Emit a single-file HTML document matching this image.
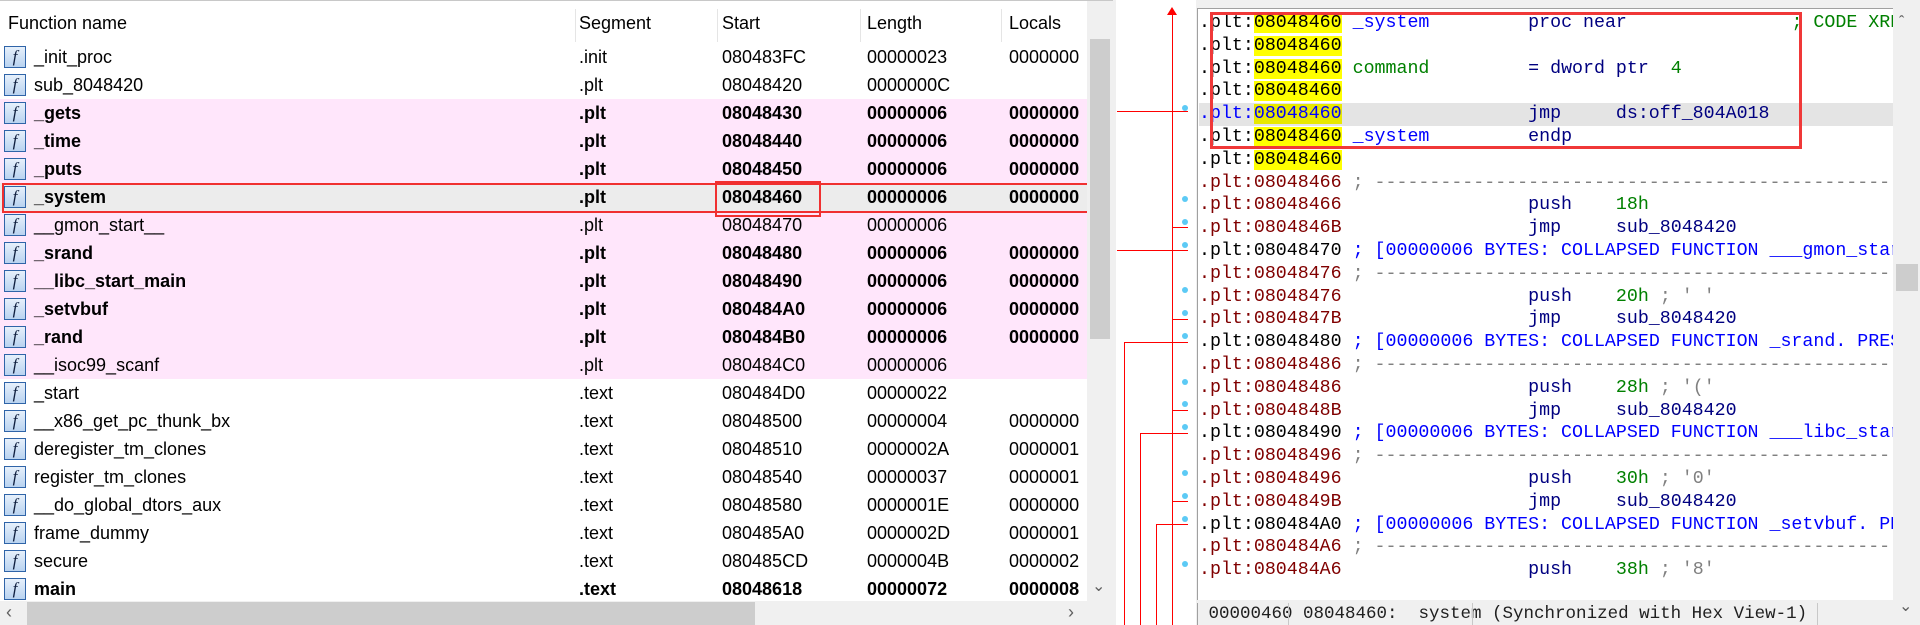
<!DOCTYPE html>
<html><head><meta charset="utf-8"><style>
*{margin:0;padding:0;box-sizing:border-box}
body{width:1920px;height:625px;overflow:hidden;background:#f0f0f0;position:relative;font-family:"Liberation Sans",sans-serif}
.a{position:absolute}
#left{left:0;top:0;width:1113px;height:625px;background:#fff;border-top:1px solid #c8c8c8;overflow:hidden}
.hdr{position:absolute;top:4px;left:0;width:1087px;height:37px;background:#fff;font-size:18px;color:#000}
.hdr span{position:absolute;top:8px}
.hsep{position:absolute;top:4px;width:1px;height:33px;background:#e5e5e5}
.row{position:absolute;left:0;width:1087px;height:28px;font-size:18px;line-height:28px;white-space:nowrap;overflow:hidden}
.row span{position:absolute;top:0}
.pk{background:#ffe6fb}
.sel{background:#ececec}
.b{font-weight:bold}
.ic{position:absolute;left:4px;top:3px;width:22px;height:22px;border:1px solid #2f64a8;background:linear-gradient(#e6f0fb,#b9d3f0);font:italic 17px "Liberation Serif",serif;line-height:20px;text-align:center;color:#102040}
#code{left:1197px;top:8px;width:696px;height:592px;background:#fff;border-left:1px solid #a0a0a0;border-top:1px solid #a0a0a0;overflow:hidden}
.ln{position:absolute;left:1px;height:22.8px;width:700px;font:18.3px/22.8px "Liberation Mono",monospace;white-space:pre}
.k{color:#000}.r{color:#800000}.y{background:#ffff00}.bl{color:#0000ff}.nv{color:#000080}.g{color:#008000}.gr{color:#808080}
.dot{position:absolute;width:6px;height:6px;border-radius:3px;background:#5ccaf5;left:1182px}
.rl{position:absolute;background:#f00}
</style></head><body>
<div id="left" class="a">
<div class="hdr"><span style="left:8px">Function name</span><span style="left:579px">Segment</span><span style="left:722px">Start</span><span style="left:867px">Length</span><span style="left:1009px">Locals</span>
<div class="hsep" style="left:575px"></div><div class="hsep" style="left:717px"></div><div class="hsep" style="left:860px"></div><div class="hsep" style="left:1001px"></div></div>

<div class="row" style="top:42px"><div class="ic">f</div><span style="left:34px">_init_proc</span><span style="left:579px">.init</span><span style="left:722px">080483FC</span><span style="left:867px">00000023</span><span style="left:1009px">0000000</span></div>
<div class="row" style="top:70px"><div class="ic">f</div><span style="left:34px">sub_8048420</span><span style="left:579px">.plt</span><span style="left:722px">08048420</span><span style="left:867px">0000000C</span></div>
<div class="row pk b" style="top:98px"><div class="ic">f</div><span style="left:34px">_gets</span><span style="left:579px">.plt</span><span style="left:722px">08048430</span><span style="left:867px">00000006</span><span style="left:1009px">0000000</span></div>
<div class="row pk b" style="top:126px"><div class="ic">f</div><span style="left:34px">_time</span><span style="left:579px">.plt</span><span style="left:722px">08048440</span><span style="left:867px">00000006</span><span style="left:1009px">0000000</span></div>
<div class="row pk b" style="top:154px"><div class="ic">f</div><span style="left:34px">_puts</span><span style="left:579px">.plt</span><span style="left:722px">08048450</span><span style="left:867px">00000006</span><span style="left:1009px">0000000</span></div>
<div class="row sel b" style="top:182px"><div class="ic">f</div><span style="left:34px">_system</span><span style="left:579px">.plt</span><span style="left:722px">08048460</span><span style="left:867px">00000006</span><span style="left:1009px">0000000</span></div>
<div class="row pk" style="top:210px"><div class="ic">f</div><span style="left:34px">__gmon_start__</span><span style="left:579px">.plt</span><span style="left:722px">08048470</span><span style="left:867px">00000006</span></div>
<div class="row pk b" style="top:238px"><div class="ic">f</div><span style="left:34px">_srand</span><span style="left:579px">.plt</span><span style="left:722px">08048480</span><span style="left:867px">00000006</span><span style="left:1009px">0000000</span></div>
<div class="row pk b" style="top:266px"><div class="ic">f</div><span style="left:34px">__libc_start_main</span><span style="left:579px">.plt</span><span style="left:722px">08048490</span><span style="left:867px">00000006</span><span style="left:1009px">0000000</span></div>
<div class="row pk b" style="top:294px"><div class="ic">f</div><span style="left:34px">_setvbuf</span><span style="left:579px">.plt</span><span style="left:722px">080484A0</span><span style="left:867px">00000006</span><span style="left:1009px">0000000</span></div>
<div class="row pk b" style="top:322px"><div class="ic">f</div><span style="left:34px">_rand</span><span style="left:579px">.plt</span><span style="left:722px">080484B0</span><span style="left:867px">00000006</span><span style="left:1009px">0000000</span></div>
<div class="row pk" style="top:350px"><div class="ic">f</div><span style="left:34px">__isoc99_scanf</span><span style="left:579px">.plt</span><span style="left:722px">080484C0</span><span style="left:867px">00000006</span></div>
<div class="row" style="top:378px"><div class="ic">f</div><span style="left:34px">_start</span><span style="left:579px">.text</span><span style="left:722px">080484D0</span><span style="left:867px">00000022</span></div>
<div class="row" style="top:406px"><div class="ic">f</div><span style="left:34px">__x86_get_pc_thunk_bx</span><span style="left:579px">.text</span><span style="left:722px">08048500</span><span style="left:867px">00000004</span><span style="left:1009px">0000000</span></div>
<div class="row" style="top:434px"><div class="ic">f</div><span style="left:34px">deregister_tm_clones</span><span style="left:579px">.text</span><span style="left:722px">08048510</span><span style="left:867px">0000002A</span><span style="left:1009px">0000001</span></div>
<div class="row" style="top:462px"><div class="ic">f</div><span style="left:34px">register_tm_clones</span><span style="left:579px">.text</span><span style="left:722px">08048540</span><span style="left:867px">00000037</span><span style="left:1009px">0000001</span></div>
<div class="row" style="top:490px"><div class="ic">f</div><span style="left:34px">__do_global_dtors_aux</span><span style="left:579px">.text</span><span style="left:722px">08048580</span><span style="left:867px">0000001E</span><span style="left:1009px">0000000</span></div>
<div class="row" style="top:518px"><div class="ic">f</div><span style="left:34px">frame_dummy</span><span style="left:579px">.text</span><span style="left:722px">080485A0</span><span style="left:867px">0000002D</span><span style="left:1009px">0000001</span></div>
<div class="row" style="top:546px"><div class="ic">f</div><span style="left:34px">secure</span><span style="left:579px">.text</span><span style="left:722px">080485CD</span><span style="left:867px">0000004B</span><span style="left:1009px">0000002</span></div>
<div class="row b" style="top:574px"><div class="ic">f</div><span style="left:34px">main</span><span style="left:579px">.text</span><span style="left:722px">08048618</span><span style="left:867px">00000072</span><span style="left:1009px">0000008</span></div>

<div class="a" style="left:2px;top:182px;width:1088px;height:30px;border:2px solid #f03030"></div>
<div class="a" style="left:715px;top:180px;width:106px;height:36px;border:2px solid #f03030"></div>
<div class="a" style="left:1087px;top:0;width:26px;height:600px;background:#f0f0f0"></div>
<div class="a" style="left:1090px;top:38px;width:20px;height:300px;background:#cdcdcd"></div>
<div class="a" style="left:1092px;top:575px;color:#606060;font-size:16px">&#8964;</div>
<div class="a" style="left:0;top:600px;width:1113px;height:25px;background:#f0f0f0"></div>
<div class="a" style="left:27px;top:601px;width:728px;height:23px;background:#cdcdcd"></div>
<div class="a" style="left:1068px;top:601px;color:#606060;font-size:18px">&#8250;</div>
<div class="a" style="left:6px;top:601px;color:#606060;font-size:18px">&#8249;</div>
</div>

<div class="a" style="left:1116px;top:0;width:80px;height:625px;background:#fff"></div>
<div class="rl" style="left:1172px;top:14px;width:1px;height:611px"></div>
<div class="a" style="left:1167px;top:7px;width:0;height:0;border-left:5px solid transparent;border-right:5px solid transparent;border-bottom:8px solid #f00"></div>
<div class="rl" style="left:1117px;top:111px;width:71px;height:1px"></div>
<div class="rl" style="left:1117px;top:250px;width:71px;height:1px"></div>
<div class="rl" style="left:1172px;top:227px;width:16px;height:1px"></div>
<div class="rl" style="left:1172px;top:319px;width:16px;height:1px"></div>
<div class="rl" style="left:1172px;top:410px;width:16px;height:1px"></div>
<div class="rl" style="left:1172px;top:501px;width:16px;height:1px"></div>
<div class="rl" style="left:1124px;top:342px;width:64px;height:1px"></div>
<div class="rl" style="left:1124px;top:342px;width:1px;height:283px"></div>
<div class="rl" style="left:1140px;top:433px;width:48px;height:1px"></div>
<div class="rl" style="left:1140px;top:433px;width:1px;height:192px"></div>
<div class="rl" style="left:1156px;top:524px;width:32px;height:1px"></div>
<div class="rl" style="left:1156px;top:524px;width:1px;height:101px"></div>
<div class="dot" style="top:105px"></div><div class="dot" style="top:196px"></div><div class="dot" style="top:219px"></div><div class="dot" style="top:242px"></div><div class="dot" style="top:287px"></div><div class="dot" style="top:310px"></div><div class="dot" style="top:333px"></div><div class="dot" style="top:379px"></div><div class="dot" style="top:401px"></div><div class="dot" style="top:424px"></div><div class="dot" style="top:470px"></div><div class="dot" style="top:493px"></div><div class="dot" style="top:516px"></div><div class="dot" style="top:561px"></div>

<div id="code" class="a">
<div class="ln" style="top:3px"><span class="k">.plt:</span><span class="y">08048460</span> <span class="bl">_system</span>         <span class="nv">proc near</span>               <span class="g">; CODE XREF</span></div>
<div class="ln" style="top:25.8px"><span class="k">.plt:</span><span class="y">08048460</span></div>
<div class="ln" style="top:48.6px"><span class="k">.plt:</span><span class="y">08048460</span> <span class="g">command</span>         <span class="nv">= dword ptr</span>  <span class="g">4</span></div>
<div class="ln" style="top:71.4px"><span class="k">.plt:</span><span class="y">08048460</span></div>
<div class="ln" style="top:94.2px;background:#e4e4e4"><span class="bl">.plt:</span><span class="y bl" style="background:#e8e800">08048460</span>                 <span class="nv">jmp     ds:off_804A018</span></div>
<div class="ln" style="top:117px"><span class="k">.plt:</span><span class="y">08048460</span> <span class="bl">_system</span>         <span class="nv">endp</span></div>
<div class="ln" style="top:139.8px"><span class="k">.plt:</span><span class="y">08048460</span></div>
<div class="ln r" style="top:162.6px">.plt:08048466 <span class="gr">; ---------------------------------------------------------</span></div>
<div class="ln" style="top:185.4px"><span class="r">.plt:08048466</span>                 <span class="nv">push</span>    <span class="g">18h</span></div>
<div class="ln" style="top:208.2px"><span class="r">.plt:0804846B</span>                 <span class="nv">jmp     sub_8048420</span></div>
<div class="ln" style="top:231px"><span class="k">.plt:08048470</span> <span class="bl">; [00000006 BYTES: COLLAPSED FUNCTION ___gmon_start</span></div>
<div class="ln r" style="top:253.8px">.plt:08048476 <span class="gr">; ---------------------------------------------------------</span></div>
<div class="ln" style="top:276.6px"><span class="r">.plt:08048476</span>                 <span class="nv">push</span>    <span class="g">20h</span> <span class="gr">; ' '</span></div>
<div class="ln" style="top:299.4px"><span class="r">.plt:0804847B</span>                 <span class="nv">jmp     sub_8048420</span></div>
<div class="ln" style="top:322.2px"><span class="k">.plt:08048480</span> <span class="bl">; [00000006 BYTES: COLLAPSED FUNCTION _srand. PRESS</span></div>
<div class="ln r" style="top:345px">.plt:08048486 <span class="gr">; ---------------------------------------------------------</span></div>
<div class="ln" style="top:367.8px"><span class="r">.plt:08048486</span>                 <span class="nv">push</span>    <span class="g">28h</span> <span class="gr">; '('</span></div>
<div class="ln" style="top:390.6px"><span class="r">.plt:0804848B</span>                 <span class="nv">jmp     sub_8048420</span></div>
<div class="ln" style="top:413.4px"><span class="k">.plt:08048490</span> <span class="bl">; [00000006 BYTES: COLLAPSED FUNCTION ___libc_start</span></div>
<div class="ln r" style="top:436.2px">.plt:08048496 <span class="gr">; ---------------------------------------------------------</span></div>
<div class="ln" style="top:459px"><span class="r">.plt:08048496</span>                 <span class="nv">push</span>    <span class="g">30h</span> <span class="gr">; '0'</span></div>
<div class="ln" style="top:481.8px"><span class="r">.plt:0804849B</span>                 <span class="nv">jmp     sub_8048420</span></div>
<div class="ln" style="top:504.6px"><span class="k">.plt:080484A0</span> <span class="bl">; [00000006 BYTES: COLLAPSED FUNCTION _setvbuf. PRE</span></div>
<div class="ln r" style="top:527.4px">.plt:080484A6 <span class="gr">; ---------------------------------------------------------</span></div>
<div class="ln" style="top:550.2px"><span class="r">.plt:080484A6</span>                 <span class="nv">push</span>    <span class="g">38h</span> <span class="gr">; '8'</span></div>
</div>
<div class="a" style="left:1210px;top:12px;width:592px;height:137px;border:3px solid #f03838"></div>
<div class="a" style="left:1893px;top:8px;width:27px;height:617px;background:#f0f0f0"></div>
<div class="a" style="left:1896px;top:264px;width:22px;height:27px;background:#cdcdcd"></div>
<div class="a" style="left:1899px;top:14px;color:#606060;font-size:16px">&#710;</div>
<div class="a" style="left:1899px;top:596px;color:#606060;font-size:16px">&#8964;</div>
<div class="a" style="left:1197px;top:603px;width:696px;height:22px;background:#f0f0f0;border-left:1px solid #a0a0a0;font:17.5px/22px 'Liberation Mono',monospace;color:#202020;white-space:pre"> 00000460 08048460:  system (Synchronized with Hex View-1)</div>
<div class="a" style="left:1288px;top:603px;width:1px;height:22px;background:#c8c8c8"></div>
<div class="a" style="left:1472px;top:603px;width:1px;height:22px;background:#c8c8c8"></div>
<div class="a" style="left:1817px;top:603px;width:1px;height:22px;background:#c8c8c8"></div>
</body></html>
